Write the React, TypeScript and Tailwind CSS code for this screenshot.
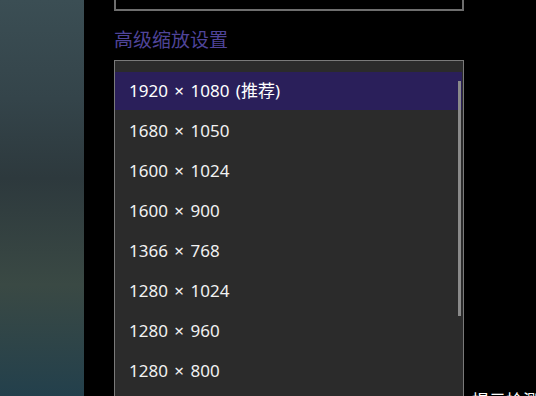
import React from "react";

const items = [
  "1920 × 1080 (推荐)",
  "1680 × 1050",
  "1600 × 1024",
  "1600 × 900",
  "1366 × 768",
  "1280 × 1024",
  "1280 × 960",
  "1280 × 800",
];

export default function App() {
  return (
    <div
      className="relative flex w-[536px] h-[396px] overflow-hidden bg-black"
      style={{ fontFamily: '"Noto Sans", "Noto Sans CJK SC", sans-serif' }}
    >
      <div className="w-[84px] h-full shrink-0 bg-[linear-gradient(to_bottom,#3b4e54_0%,#34444a_25%,#2d393d_45%,#3a4944_72%,#23404c_100%)]" />
      <div className="relative flex-1 flex flex-col pl-[30px]">
        <div className="w-[350px] h-[11px] border-x-2 border-b-2 border-[#6e6e6e]" />
        <div className="mt-[16px] text-[19px] leading-[26px] text-[#4f4499]">
          高级缩放设置
        </div>
        <div className="absolute left-[388px] top-[389px] whitespace-nowrap text-[17px] leading-[24px] text-white">
          提示检测
        </div>
        <div className="absolute left-[30px] top-[60px] w-[350px] h-[400px] border border-[#7a7a7a] bg-[#2b2b2b] pt-[10px]">
          <div className="flex flex-col">
            {items.map((t, i) => (
              <div
                key={t}
                className={
                  i === 0
                    ? "my-[1px] mr-[1px] h-[38px] flex items-center pl-[14px] text-[17px] [word-spacing:2px] text-white bg-[#2a1f5a]"
                    : "my-[1px] mr-[1px] h-[38px] flex items-center pl-[14px] text-[17px] [word-spacing:2px] text-[#f2f2f2]"
                }
              >
                {t}
              </div>
            ))}
          </div>
          <div className="absolute right-[2px] top-[20px] w-[3px] h-[235px] bg-[#8a8a8a]" />
        </div>
      </div>
    </div>
  );
}
